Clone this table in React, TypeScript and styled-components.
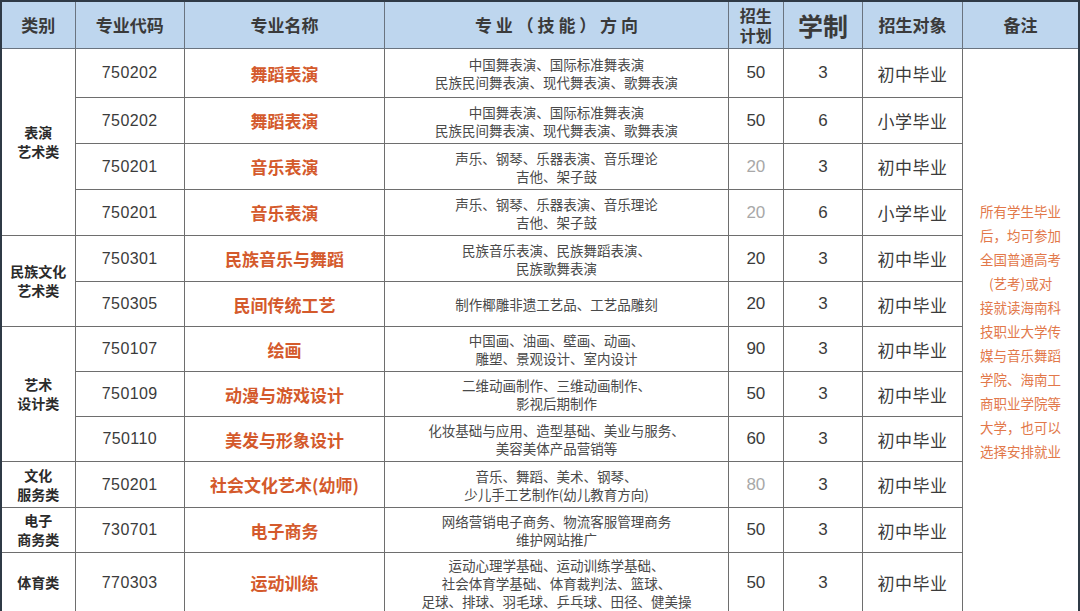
import React from "react";
import styled, { createGlobalStyle } from "styled-components";

const GlobalStyle = createGlobalStyle`
  html, body {
    margin: 0;
    padding: 0;
    background: #ffffff;
  }
  body {
    font-family: "Noto Sans CJK SC", "Liberation Sans", sans-serif;
    color: #333;
  }
`;

const Table = styled.table`
  width: 1080px;
  table-layout: fixed;
  border-collapse: collapse;
  border-top: 2px solid #2f3a46;
  border-left: 2px solid #2f3a46;
  border-right: 2px solid #2f3a46;
`;

const HeadCell = styled.th<{ $size?: number }>`
  height: 46px;
  padding: 0;
  background: #bed6ee;
  border: 1px solid #6a7480;
  font-size: ${({ $size }) => $size ?? 17}px;
  font-weight: 700;
  color: #3a3a3a;
  line-height: ${({ $size }) => ($size && $size < 17 ? 20 : 24)}px;
  text-align: center;
  white-space: pre-line;
`;

const Row = styled.tr<{ $h: number }>`
  height: ${({ $h }) => $h}px;
`;

const Cell = styled.td`
  padding: 0;
  border: 1px solid #6e6e6e;
  text-align: center;
  vertical-align: middle;
`;

const CategoryCell = styled(Cell)`
  font-size: 14px;
  font-weight: 700;
  line-height: 19px;
  color: #2b2b2b;
  white-space: pre-line;
`;

const CodeCell = styled(Cell)`
  font-family: "Liberation Sans", sans-serif;
  font-size: 16px;
  color: #3b3b3b;
  letter-spacing: 0.4px;
`;

const NameCell = styled(Cell)`
  font-size: 17px;
  font-weight: 700;
  color: #d45a2c;
`;

const DirectionCell = styled(Cell)`
  font-size: 13.5px;
  line-height: 18px;
  color: #4a4a4a;
  white-space: pre-line;
`;

const NumberCell = styled(Cell)<{ $faded?: boolean }>`
  font-family: "Liberation Sans", sans-serif;
  font-size: 17px;
  color: ${({ $faded }) => ($faded ? "#a8a8a8" : "#3b3b3b")};
`;

const TargetCell = styled(Cell)`
  font-size: 17px;
  color: #3b3b3b;
  letter-spacing: 0.5px;
`;

const NoteCell = styled(Cell)`
  font-size: 13.5px;
  line-height: 24px;
  color: #e2784a;
  white-space: pre-line;
`;

type Major = {
  code: string;
  name: string;
  direction: string;
  plan: string;
  faded?: boolean;
  years: string;
  target: string;
  height: number;
  category?: { label: string; span: number };
};

const majors: Major[] = [
  {
    code: "750202",
    name: "舞蹈表演",
    direction: "中国舞表演、国际标准舞表演\n民族民间舞表演、现代舞表演、歌舞表演",
    plan: "50",
    years: "3",
    target: "初中毕业",
    height: 49,
    category: { label: "表演\n艺术类", span: 4 },
  },
  {
    code: "750202",
    name: "舞蹈表演",
    direction: "中国舞表演、国际标准舞表演\n民族民间舞表演、现代舞表演、歌舞表演",
    plan: "50",
    years: "6",
    target: "小学毕业",
    height: 46,
  },
  {
    code: "750201",
    name: "音乐表演",
    direction: "声乐、钢琴、乐器表演、音乐理论\n吉他、架子鼓",
    plan: "20",
    faded: true,
    years: "3",
    target: "初中毕业",
    height: 46,
  },
  {
    code: "750201",
    name: "音乐表演",
    direction: "声乐、钢琴、乐器表演、音乐理论\n吉他、架子鼓",
    plan: "20",
    faded: true,
    years: "6",
    target: "小学毕业",
    height: 46,
  },
  {
    code: "750301",
    name: "民族音乐与舞蹈",
    direction: "民族音乐表演、民族舞蹈表演、\n民族歌舞表演",
    plan: "20",
    years: "3",
    target: "初中毕业",
    height: 46,
    category: { label: "民族文化\n艺术类", span: 2 },
  },
  {
    code: "750305",
    name: "民间传统工艺",
    direction: "制作椰雕非遗工艺品、工艺品雕刻",
    plan: "20",
    years: "3",
    target: "初中毕业",
    height: 45,
  },
  {
    code: "750107",
    name: "绘画",
    direction: "中国画、油画、壁画、动画、\n雕塑、景观设计、室内设计",
    plan: "90",
    years: "3",
    target: "初中毕业",
    height: 45,
    category: { label: "艺术\n设计类", span: 3 },
  },
  {
    code: "750109",
    name: "动漫与游戏设计",
    direction: "二维动画制作、三维动画制作、\n影视后期制作",
    plan: "50",
    years: "3",
    target: "初中毕业",
    height: 45,
  },
  {
    code: "750110",
    name: "美发与形象设计",
    direction: "化妆基础与应用、造型基础、美业与服务、\n美容美体产品营销等",
    plan: "60",
    years: "3",
    target: "初中毕业",
    height: 45,
  },
  {
    code: "750201",
    name: "社会文化艺术(幼师)",
    direction: "音乐、舞蹈、美术、钢琴、\n少儿手工艺制作(幼儿教育方向)",
    plan: "80",
    faded: true,
    years: "3",
    target: "初中毕业",
    height: 46,
    category: { label: "文化\n服务类", span: 1 },
  },
  {
    code: "730701",
    name: "电子商务",
    direction: "网络营销电子商务、物流客服管理商务\n维护网站推广",
    plan: "50",
    years: "3",
    target: "初中毕业",
    height: 45,
    category: { label: "电子\n商务类", span: 1 },
  },
  {
    code: "770303",
    name: "运动训练",
    direction:
      "运动心理学基础、运动训练学基础、\n社会体育学基础、体育裁判法、篮球、\n足球、排球、羽毛球、乒乓球、田径、健美操",
    plan: "50",
    years: "3",
    target: "初中毕业",
    height: 60,
    category: { label: "体育类", span: 1 },
  },
];

const note =
  "所有学生毕业\n后，均可参加\n全国普通高考\n(艺考)或对\n接就读海南科\n技职业大学传\n媒与音乐舞蹈\n学院、海南工\n商职业学院等\n大学，也可以\n选择安排就业";

const App: React.FC = () => {
  return (
    <>
      <GlobalStyle />
      <Table>
        <colgroup>
          <col style={{ width: 74 }} />
          <col style={{ width: 109 }} />
          <col style={{ width: 200 }} />
          <col style={{ width: 343 }} />
          <col style={{ width: 55 }} />
          <col style={{ width: 79 }} />
          <col style={{ width: 100 }} />
          <col style={{ width: 116 }} />
        </colgroup>
        <thead>
          <tr>
            <HeadCell>类别</HeadCell>
            <HeadCell>专业代码</HeadCell>
            <HeadCell>专业名称</HeadCell>
            <HeadCell>专 业 （ 技 能 ） 方 向</HeadCell>
            <HeadCell $size={16}>{"招生\n计划"}</HeadCell>
            <HeadCell $size={25}>学制</HeadCell>
            <HeadCell>招生对象</HeadCell>
            <HeadCell>备注</HeadCell>
          </tr>
        </thead>
        <tbody>
          {majors.map((m, i) => (
            <Row key={i} $h={m.height}>
              {m.category && (
                <CategoryCell rowSpan={m.category.span}>{m.category.label}</CategoryCell>
              )}
              <CodeCell>{m.code}</CodeCell>
              <NameCell>{m.name}</NameCell>
              <DirectionCell>{m.direction}</DirectionCell>
              <NumberCell $faded={m.faded}>{m.plan}</NumberCell>
              <NumberCell>{m.years}</NumberCell>
              <TargetCell>{m.target}</TargetCell>
              {i === 0 && <NoteCell rowSpan={majors.length}>{note}</NoteCell>}
            </Row>
          ))}
        </tbody>
      </Table>
    </>
  );
};

export default App;
